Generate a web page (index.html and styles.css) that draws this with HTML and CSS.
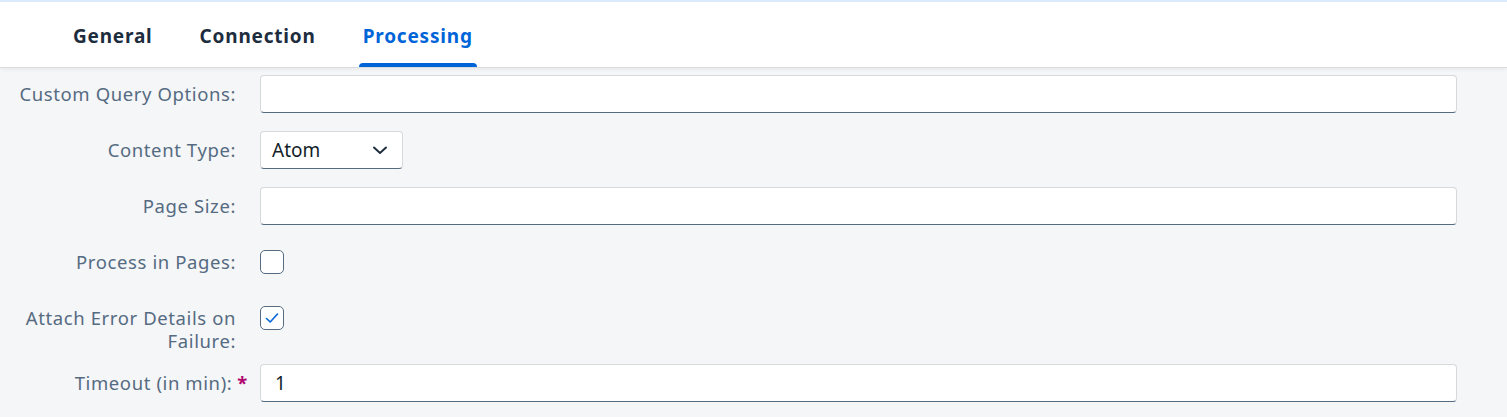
FILE: index.html
```html
<!DOCTYPE html>
<html>
<head>
<meta charset="utf-8">
<link rel="stylesheet" href="styles.css">
</head>
<body>
<div class="topstrip"></div>
<header class="tabbar">
  <div class="tab">General</div>
  <div class="tab">Connection</div>
  <div class="tab active">Processing</div>
</header>
<main class="form">
  <div class="row">
    <label class="lbl">Custom Query Options:</label>
    <div class="ctl"><div class="input"></div></div>
  </div>
  <div class="row">
    <label class="lbl">Content Type:</label>
    <div class="ctl">
      <div class="select"><span>Atom</span>
        <svg class="chev" width="16" height="16" viewBox="0 0 16 16"><path d="M2 5.5 L8 11 L14 5.5" fill="none" stroke="#1d2d3e" stroke-width="1.9" stroke-linecap="round" stroke-linejoin="round"/></svg>
      </div>
    </div>
  </div>
  <div class="row">
    <label class="lbl">Page Size:</label>
    <div class="ctl"><div class="input"></div></div>
  </div>
  <div class="row">
    <label class="lbl">Process in Pages:</label>
    <div class="ctl"><div class="cb"></div></div>
  </div>
  <div class="row tight">
    <label class="lbl">Attach Error Details on Failure:</label>
    <div class="ctl"><div class="cb">
      <svg width="22" height="22" viewBox="0 0 22 22"><path d="M5.5 11.5 L9.2 15 L16.5 7" fill="none" stroke="#0064d9" stroke-width="1.6" stroke-linecap="round" stroke-linejoin="round"/></svg>
    </div></div>
  </div>
  <div class="row">
    <label class="lbl req">Timeout (in min):<span class="star">*</span></label>
    <div class="ctl"><div class="input"><span class="val">1</span></div></div>
  </div>
</main>
</body>
</html>
```
FILE: styles.css
```css
* { box-sizing: border-box; }
html, body { margin: 0; padding: 0; }
body {
  background: #f5f6f7;
  font-family: "Noto Sans", "Liberation Sans", sans-serif;
  width: 1507px;
  height: 417px;
  overflow: hidden;
}
.topstrip { height: 2px; background: #d9ebfc; }
.tabbar {
  height: 65px;
  background: #fff;
  display: flex;
  align-items: stretch;
  padding-left: 69px;
  gap: 39px;
  box-shadow: 0 1px 0 #d9dcdf, 0 2px 4px rgba(34, 53, 72, 0.08);
  position: relative;
}
.tab {
  padding: 3px 4px 0;
  font-size: 19px;
  font-weight: 700;
  letter-spacing: 0.8px;
  color: #1d2d3e;
  display: flex;
  align-items: center;
  position: relative;
}
.tab.active { color: #0064d9; }
.tab.active::after {
  content: "";
  position: absolute;
  left: 0; right: 0; bottom: 0;
  height: 4px;
  background: #0064d9;
  border-radius: 4px 4px 0 0;
}
.form {
  padding: 8px 50px 0 16px;
}
.row {
  display: grid;
  grid-template-columns: 220px 1fr;
  column-gap: 24px;
  align-items: start;
  margin-bottom: 18px;
}
.row.tight { margin-bottom: 12px; }
.lbl {
  text-align: right;
  color: #556b82;
  font-size: 18.5px;
  letter-spacing: 0.6px;
  line-height: 23px;
  padding-top: 7px;
}
.star {
  color: #b0086e;
  font-weight: 700;
  margin-left: 5px;
  margin-right: -12px;
}
.ctl { height: 38px; display: flex; align-items: center; }
.input, .select {
  height: 38px;
  width: 100%;
  background: #fff;
  border: 1px solid #d5dadd;
  border-bottom-color: #556b82;
  border-radius: 4px;
  display: flex;
  align-items: center;
  padding: 0 12px 0 14px;
  font-size: 19px;
  color: #131e29;
}
.select { width: 143px; justify-content: space-between; padding: 0 14px 0 11px; }
.cb {
  width: 24px; height: 24px;
  border: 1px solid #556b82;
  border-radius: 5px;
  background: #fff;
  display: flex; align-items: center; justify-content: center;
}
```
